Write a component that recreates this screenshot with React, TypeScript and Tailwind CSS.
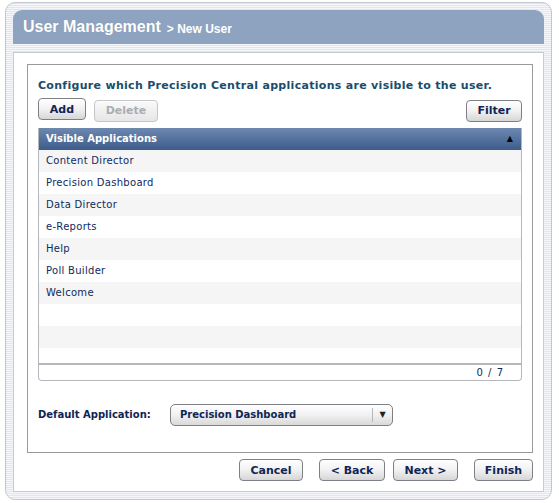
import React from "react";

const apps = [
  "Content Director",
  "Precision Dashboard",
  "Data Director",
  "e-Reports",
  "Help",
  "Poll Builder",
  "Welcome",
  "",
  "",
  "",
];

function Btn({ label, w, disabled }: { label: string; w: string; disabled?: boolean }) {
  return (
    <button
      className={
        "h-[22px] rounded-[4px] border text-[11px] font-bold leading-none shadow-[inset_0_1px_0_#fff] " +
        w +
        (disabled
          ? " border-[#c4c6c9] bg-gradient-to-b from-[#fafafa] to-[#e6e6e6] text-[#a9adb2]"
          : " border-[#7d8187] bg-gradient-to-b from-white via-[#f1f1f1] to-[#d6d6d6] text-[#0f2556]")
      }
    >
      {label}
    </button>
  );
}

export default function App() {
  return (
    <div className="w-[559px] h-[503px] bg-white pt-[2px] pl-[5px] font-['DejaVu_Sans',Verdana,sans-serif]">
      <div className="w-[547px] h-[498px] rounded-[10px] border border-[#c3c7d0] p-[7px] bg-[repeating-linear-gradient(180deg,#e2e5ed_0px,#e2e5ed_1px,#f6f7fa_1px,#f6f7fa_2px)] flex flex-col">
        <div className="h-[34px] rounded-tl-[9px] rounded-tr-[9px] bg-[#8ea3c0] flex items-end pl-[10px] pb-[9px] font-['Liberation_Sans',Arial,sans-serif] text-white">
          <span className="text-[16px] font-bold leading-none [text-shadow:0_0_1px_#7e8fa8]">User Management</span>
          <span className="ml-[6px] text-[12px] font-bold leading-none">&gt; New User</span>
        </div>
        <div className="mt-[8px] flex-1 bg-white border border-[#c7cbd3] pl-[13px] pr-[10px] pt-[11px] flex flex-col">
          <div className="h-[389px] border border-[#9a9a9a] px-[10px] pt-[15px]">
            <div className="text-[11px] font-bold text-[#1a4d6c] leading-none tracking-[0.3px]">
              Configure which Precision Central applications are visible to the user.
            </div>
            <div className="mt-[6px] flex items-center">
              <Btn label="Add" w="w-[48px]" />
              <div className="ml-[8px]">
                <Btn label="Delete" w="w-[64px]" disabled />
              </div>
              <div className="ml-auto">
                <Btn label="Filter" w="w-[56px]" />
              </div>
            </div>
            <div className="mt-[6px] w-[484px] h-[253px] rounded-b-[4px] border border-t-0 border-[#b4b8bd] flex flex-col overflow-hidden">
              <div className="h-[22px] shrink-0 bg-gradient-to-b from-[#6e89b0] to-[#3d5c8c] flex items-center pl-[7px] pr-[8px] text-white text-[10px] font-bold">
                <span>Visible Applications</span>
                <span className="ml-auto text-[8px] text-black">▲</span>
              </div>
              <div className="h-[213px] overflow-hidden">
                {apps.map((a, i) => (
                  <div
                    key={i}
                    className={
                      "h-[22px] flex items-center pl-[7px] text-[10px] text-[#0f2a60] tracking-[0.3px] " +
                      (i % 2 === 0 ? "bg-[#f5f5f5]" : "bg-white")
                    }
                  >
                    {a}
                  </div>
                ))}
              </div>
              <div className="flex-1 border-t-2 border-[#b4b8bd] flex items-center justify-end pr-[17px] text-[10px] text-[#0f2a60] tracking-[1px]">
                0 / 7
              </div>
            </div>
            <div className="mt-[23px] flex items-center">
              <span className="w-[132px] text-[10px] font-bold text-[#0f2556]">Default Application:</span>
              <div className="w-[223px] h-[22px] rounded-[5px] border border-[#7d8187] bg-gradient-to-b from-white via-[#f1f1f1] to-[#d9d9d9] flex items-center">
                <span className="flex-1 pl-[9px] text-[10px] font-bold text-[#0f2556]">Precision Dashboard</span>
                <span className="w-px h-[14px] bg-[#b5b8bc]" />
                <span className="w-[19px] text-center text-[8px] text-[#222]">▼</span>
              </div>
            </div>
          </div>
          <div className="mt-[6px] flex items-center justify-end gap-[16px] pr-0">
            <Btn label="Cancel" w="w-[64px]" />
            <div className="flex gap-[8px]">
              <Btn label="< Back" w="w-[66px]" />
              <Btn label="Next >" w="w-[65px]" />
            </div>
            <Btn label="Finish" w="w-[59px]" />
          </div>
        </div>
      </div>
    </div>
  );
}
